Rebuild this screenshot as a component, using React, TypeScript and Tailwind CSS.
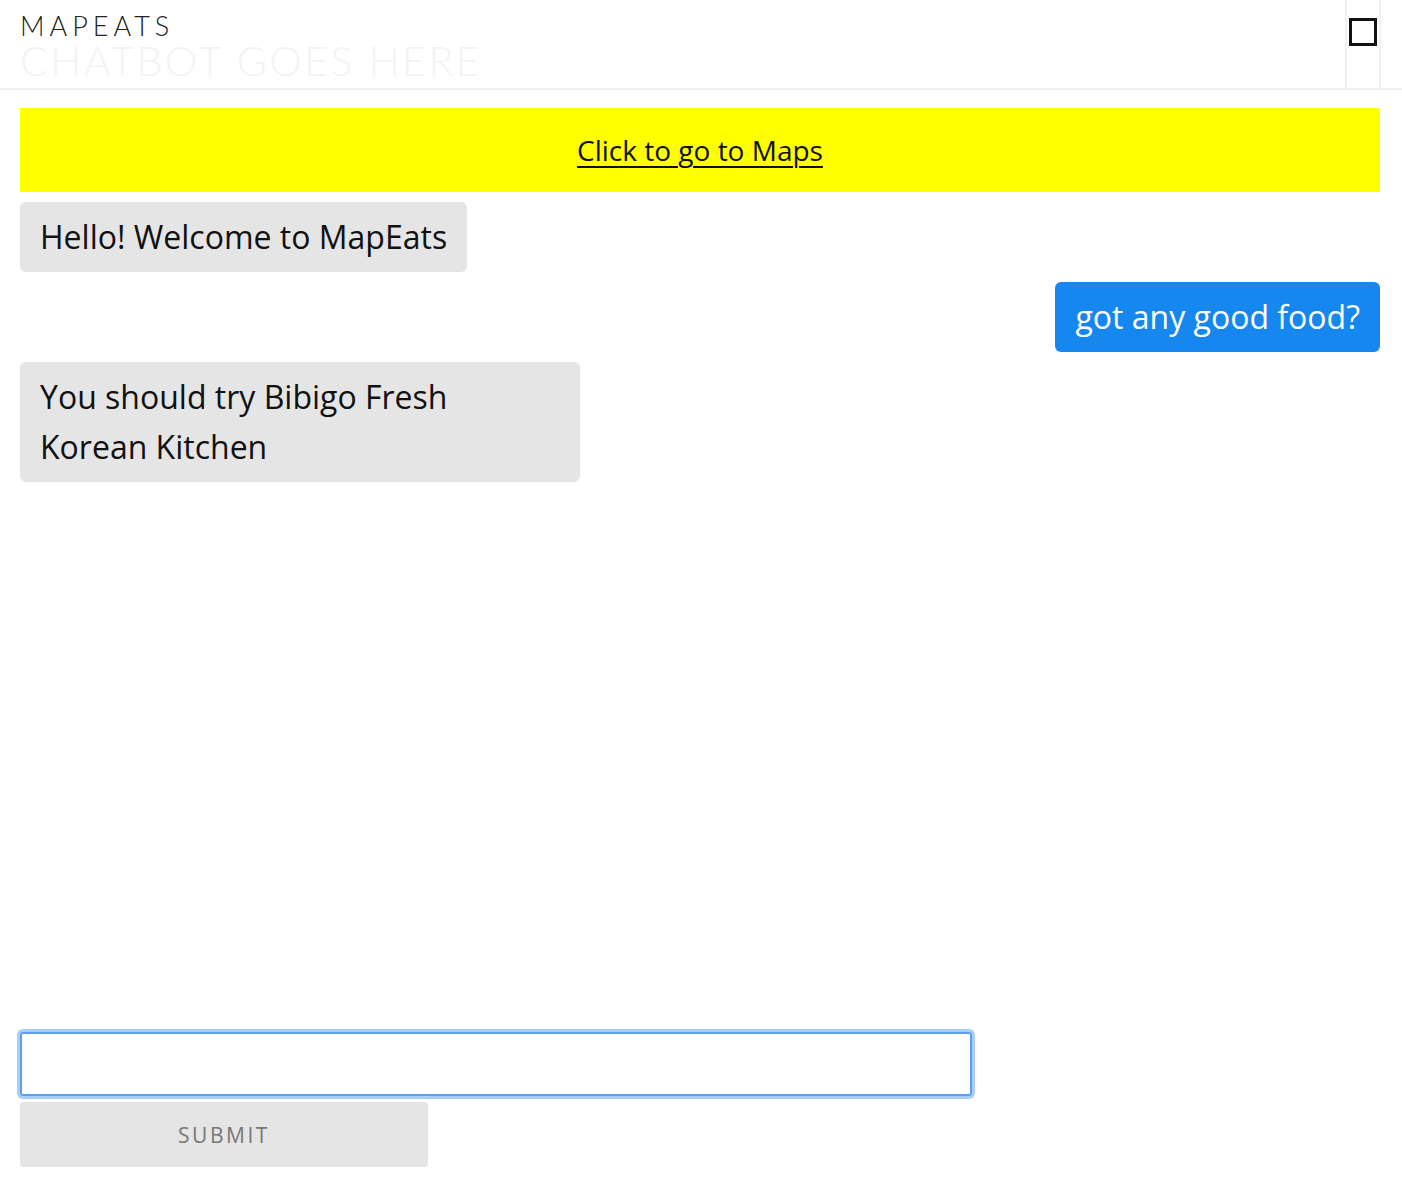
export default function App() {
  const messages = [
    { from: 'bot', text: 'Hello! Welcome to MapEats' },
    { from: 'user', text: 'got any good food?' },
    { from: 'bot', text: 'You should try Bibigo Fresh Korean Kitchen' },
  ]

  return (
    <div className="h-screen flex flex-col bg-white font-['Open_Sans',sans-serif]">
      <header className="h-[90px] shrink-0 flex border-b-2 border-[#eeeeee]">
        <div className="flex-1 pl-5 pt-[11px] font-['Lato',sans-serif] font-light">
          <div className="text-[27px] leading-[30px] tracking-[5px] text-[#222]">MAPEATS</div>
          <div className="text-[41px] leading-[40px] tracking-[2.5px] text-[#f3f3f3]">CHATBOT GOES HERE</div>
        </div>
        <div className="w-[36px] mr-[21px] border-x-2 border-[#f0f0f0] flex justify-center pt-[18px]">
          <div className="w-[28px] h-[28px] border-[3px] border-[#111]" />
        </div>
      </header>

      <main className="flex-1 flex flex-col pl-5 pr-[22px] pt-[18px]">
        <div className="h-[84px] bg-[#ffff00] flex items-center justify-center">
          <a href="#" className="text-[28px] text-[#111] underline underline-offset-[5px] decoration-[1.5px]">
            Click to go to Maps
          </a>
        </div>

        <div className="flex flex-col gap-[10px] mt-[10px]">
          {messages.map((m, i) => (
            <div key={i} className={m.from === 'user' ? 'flex justify-end' : 'flex justify-start'}>
              <div
                className={
                  m.from === 'user'
                    ? 'bg-[#1587ee] text-white rounded-md px-5 py-[10px] text-[32px] leading-[50px] max-w-[560px]'
                    : 'bg-[#e5e5e5] text-[#111] rounded-md px-5 py-[10px] text-[32px] leading-[50px] max-w-[560px]'
                }
              >
                {m.text}
              </div>
            </div>
          ))}
        </div>

        <div className="flex-1" />

        <form className="pb-[35px] flex flex-col gap-[6px]" onSubmit={e => e.preventDefault()}>
          <input
            type="text"
            className="w-[952px] h-[64px] border-2 border-[#5c9ef0] rounded-[3px] outline-none shadow-[0_0_0_3px_#a9cdfa] px-3 text-2xl"
          />
          <button
            type="submit"
            className="w-[408px] h-[65px] pt-[3px] bg-[#e5e5e5] rounded-[3px] text-[21px] tracking-[0.12em] text-[#777]"
          >
            SUBMIT
          </button>
        </form>
      </main>
    </div>
  )
}
